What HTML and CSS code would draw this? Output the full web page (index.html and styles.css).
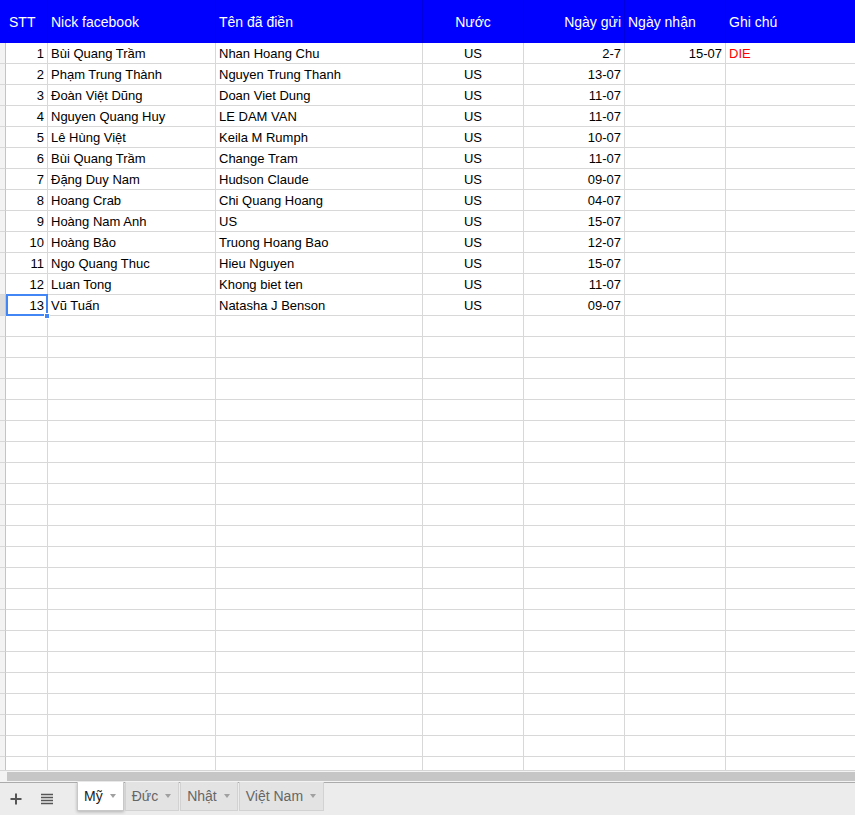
FILE: index.html
```html
<!DOCTYPE html>
<html lang="vi">
<head>
<meta charset="utf-8">
<title>Sheet</title>
<link rel="stylesheet" href="styles.css">
</head>
<body>
<div class="sheet">
  <div class="grid">
    <div class="h rh"></div>
    <div class="h">STT</div>
    <div class="h">Nick facebook</div>
    <div class="h">Tên đã điền</div>
    <div class="h c">Nước</div>
    <div class="h r">Ngày gửi</div>
    <div class="h">Ngày nhận</div>
    <div class="h last">Ghi chú</div>

    <div class="rh"></div><div class="r">1</div><div>Bùi Quang Trầm</div><div>Nhan Hoang Chu</div><div class="c">US</div><div class="r">2-7</div><div class="r">15-07</div><div class="last red">DIE</div>
    <div class="rh"></div><div class="r">2</div><div>Phạm Trung Thành</div><div>Nguyen Trung Thanh</div><div class="c">US</div><div class="r">13-07</div><div></div><div class="last"></div>
    <div class="rh"></div><div class="r">3</div><div>Đoàn Việt Dũng</div><div>Doan Viet Dung</div><div class="c">US</div><div class="r">11-07</div><div></div><div class="last"></div>
    <div class="rh"></div><div class="r">4</div><div>Nguyen Quang Huy</div><div>LE DAM VAN</div><div class="c">US</div><div class="r">11-07</div><div></div><div class="last"></div>
    <div class="rh"></div><div class="r">5</div><div>Lê Hùng Việt</div><div>Keila M Rumph</div><div class="c">US</div><div class="r">10-07</div><div></div><div class="last"></div>
    <div class="rh"></div><div class="r">6</div><div>Bùi Quang Trầm</div><div>Change Tram</div><div class="c">US</div><div class="r">11-07</div><div></div><div class="last"></div>
    <div class="rh"></div><div class="r">7</div><div>Đặng Duy Nam</div><div>Hudson Claude</div><div class="c">US</div><div class="r">09-07</div><div></div><div class="last"></div>
    <div class="rh"></div><div class="r">8</div><div>Hoang Crab</div><div>Chi Quang Hoang</div><div class="c">US</div><div class="r">04-07</div><div></div><div class="last"></div>
    <div class="rh"></div><div class="r">9</div><div>Hoàng Nam Anh</div><div>US</div><div class="c">US</div><div class="r">15-07</div><div></div><div class="last"></div>
    <div class="rh"></div><div class="r">10</div><div>Hoàng Bảo</div><div>Truong Hoang Bao</div><div class="c">US</div><div class="r">12-07</div><div></div><div class="last"></div>
    <div class="rh"></div><div class="r">11</div><div>Ngo Quang Thuc</div><div>Hieu Nguyen</div><div class="c">US</div><div class="r">15-07</div><div></div><div class="last"></div>
    <div class="rh"></div><div class="r">12</div><div>Luan Tong</div><div>Khong biet ten</div><div class="c">US</div><div class="r">11-07</div><div></div><div class="last"></div>
    <div class="rh sel-row"></div><div class="r sel">13<span class="sel-box"></span><span class="sel-handle"></span></div><div>Vũ Tuấn</div><div>Natasha J Benson</div><div class="c">US</div><div class="r">09-07</div><div></div><div class="last"></div>

    <div class="rh"></div><div></div><div></div><div></div><div></div><div></div><div></div><div class="last"></div>
    <div class="rh"></div><div></div><div></div><div></div><div></div><div></div><div></div><div class="last"></div>
    <div class="rh"></div><div></div><div></div><div></div><div></div><div></div><div></div><div class="last"></div>
    <div class="rh"></div><div></div><div></div><div></div><div></div><div></div><div></div><div class="last"></div>
    <div class="rh"></div><div></div><div></div><div></div><div></div><div></div><div></div><div class="last"></div>
    <div class="rh"></div><div></div><div></div><div></div><div></div><div></div><div></div><div class="last"></div>
    <div class="rh"></div><div></div><div></div><div></div><div></div><div></div><div></div><div class="last"></div>
    <div class="rh"></div><div></div><div></div><div></div><div></div><div></div><div></div><div class="last"></div>
    <div class="rh"></div><div></div><div></div><div></div><div></div><div></div><div></div><div class="last"></div>
    <div class="rh"></div><div></div><div></div><div></div><div></div><div></div><div></div><div class="last"></div>
    <div class="rh"></div><div></div><div></div><div></div><div></div><div></div><div></div><div class="last"></div>
    <div class="rh"></div><div></div><div></div><div></div><div></div><div></div><div></div><div class="last"></div>
    <div class="rh"></div><div></div><div></div><div></div><div></div><div></div><div></div><div class="last"></div>
    <div class="rh"></div><div></div><div></div><div></div><div></div><div></div><div></div><div class="last"></div>
    <div class="rh"></div><div></div><div></div><div></div><div></div><div></div><div></div><div class="last"></div>
    <div class="rh"></div><div></div><div></div><div></div><div></div><div></div><div></div><div class="last"></div>
    <div class="rh"></div><div></div><div></div><div></div><div></div><div></div><div></div><div class="last"></div>
    <div class="rh"></div><div></div><div></div><div></div><div></div><div></div><div></div><div class="last"></div>
    <div class="rh"></div><div></div><div></div><div></div><div></div><div></div><div></div><div class="last"></div>
    <div class="rh"></div><div></div><div></div><div></div><div></div><div></div><div></div><div class="last"></div>
    <div class="rh"></div><div></div><div></div><div></div><div></div><div></div><div></div><div class="last"></div>
    <div class="rh"></div><div></div><div></div><div></div><div></div><div></div><div></div><div class="last"></div>
  </div>

  <div class="hscroll"><div class="thumb"></div></div>

  <div class="tabbar">
    <div class="icon-btn">
      <svg width="12" height="12" viewBox="0 0 12 12"><path d="M6 0.5V11.5M0.5 6H11.5" stroke="#555" stroke-width="2" fill="none"/></svg>
    </div>
    <div class="icon-btn">
      <svg width="12" height="12" viewBox="0 0 12 12"><path d="M0 1.5H12M0 4.5H12M0 7.5H12M0 10.5H12" stroke="#555" stroke-width="1.6" fill="none"/></svg>
    </div>
    <div class="tabs">
      <div class="tab active">Mỹ<span class="caret"></span></div>
      <div class="tab">Đức<span class="caret"></span></div>
      <div class="tab">Nhật<span class="caret"></span></div>
      <div class="tab">Việt Nam<span class="caret"></span></div>
    </div>
  </div>
</div>
</body>
</html>
```

FILE: styles.css
```css
* { box-sizing: border-box; }
html, body { margin: 0; padding: 0; background: #fff; }
body {
  font-family: "Liberation Sans", Arial, sans-serif;
  font-size: 13px;
  color: #000;
  width: 855px;
  height: 815px;
  overflow: hidden;
}
.sheet { width: 855px; height: 815px; display: flex; flex-direction: column; }

.grid {
  height: 770px;
  overflow: hidden;
  display: grid;
  grid-template-columns: 6px 42px 168px 207px 101px 101px 101px 1fr;
  grid-template-rows: 43px;
  grid-auto-rows: 21px;
}
.grid > div {
  border-right: 1px solid #d8d8d8;
  border-bottom: 1px solid #d8d8d8;
  padding: 1px 3px 0;
  line-height: 20px;
  white-space: nowrap;
  overflow: hidden;
}
.grid > div.last { border-right: none; }
.grid > div.r { text-align: right; }
.grid > div.c { text-align: center; }
.grid > div.red { color: #ff0000; }

.grid > div.rh {
  background: #f3f3f3;
  border-right: 1px solid #c4c4c4;
  padding: 0;
}
.grid > div.rh.sel-row { background: #dcdcdc; }

.grid > div.h {
  background: #0000ff;
  color: #fff;
  font-size: 14px;
  line-height: 42px;
  padding-top: 1px;
  border-bottom: none;
  border-right: 1px solid #0000dc;
}
.grid > div.h.rh { border-right: 1px solid #0000ff; }
.grid > div.h.last { border-right: none; }

.grid > div.sel { position: relative; overflow: visible; }
.sel-box {
  position: absolute;
  left: 0;
  top: -1px;
  right: -1px;
  bottom: -1px;
  border: 2px solid #4285f4;
}
.sel-handle {
  position: absolute;
  width: 6px;
  height: 6px;
  right: -3px;
  bottom: -4px;
  background: #4285f4;
  border: 1px solid #fff;
  z-index: 2;
}

.hscroll {
  height: 12px;
  border-top: 1px solid #d6d6d6;
  background: #f3f3f3;
  padding: 1px 0 1px 7px;
}
.thumb { height: 9px; background: #c6c6c6; }

.tabbar {
  flex: 1;
  background: #ececec;
  border-top: 1px solid #ababab;
  display: flex;
  align-items: flex-start;
}
.icon-btn {
  width: 31px;
  height: 32px;
  display: flex;
  align-items: center;
  justify-content: center;
}
.tabs {
  display: flex;
  gap: 1px;
  margin-left: 15px;
  margin-top: -1px;
}
.tab {
  height: 29px;
  display: flex;
  align-items: center;
  gap: 7px;
  padding: 0 7px 1px 6px;
  background: #e3e3e3;
  border: 1px solid #d2d2d2;
  border-top: none;
  color: #666;
  font-size: 14px;
}
.tab.active {
  background: #fff;
  color: #222;
  border-color: #c8c8c8;
  box-shadow: 0 1px 3px rgba(0,0,0,0.25);
}
.caret {
  width: 0;
  height: 0;
  border-left: 3.5px solid transparent;
  border-right: 3.5px solid transparent;
  border-top: 4px solid #a0a0a0;
}
```
